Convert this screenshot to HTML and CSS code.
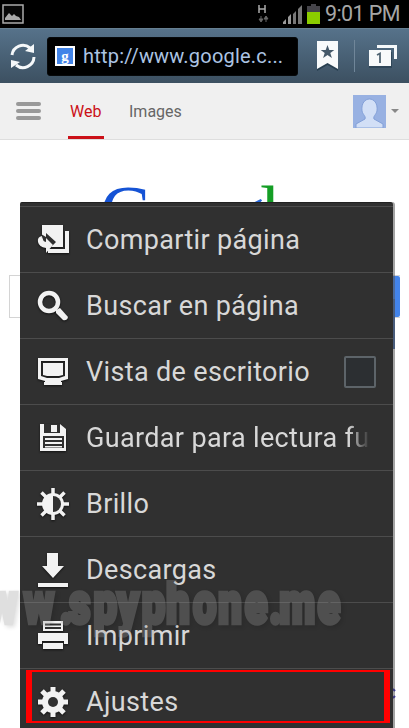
FILE: index.html
```html
<!DOCTYPE html>
<html lang="es">
<head>
<meta charset="utf-8">
<title>Google</title>
<link rel="stylesheet" href="styles.css">
</head>
<body>
<main class="phone">
  <header class="status">
    <svg class="picture" width="22" height="20" viewBox="0 0 22 20"><path d="M1 1h20v18H1z" fill="#080808" stroke="#aaa" stroke-width="1.5"/><path d="M3 16v-2l4-5 3 3 2-2 2 2 3 1 2 3z" fill="#aaa"/></svg>
    <svg class="network" width="12" height="20" viewBox="0 0 12 20"><path d="M1 1v8M7 1v8M1 5h6" stroke="#aaa" stroke-width="1.5"/><path d="M3 12v5M1 15l2 3 2-3zM8 18v-5M6 15l2-3 2 3z" fill="#666" stroke="#666"/></svg>
    <svg class="signal" width="19" height="19" viewBox="0 0 19 19"><path d="M0 19v-2l3-3v5zM5 19v-7l3-3v10z" fill="#999"/><path d="M10 19V9l3-3v13zM15 19V4l4-4v19z" fill="#777"/></svg>
    <svg class="battery" width="13" height="20" viewBox="0 0 13 20"><path d="M0 2h4V0h5v2h4v7H0z" fill="#45444a"/><path d="M0 8h13v12H0z" fill="#8bcc00"/></svg>
    <span class="clock">9:01 PM</span>
  </header>
  <nav class="toolbar">
    <svg class="reload" width="26" height="27" viewBox="0 0 26 27"><path d="M2 12A11 11 0 0 1 20 5M24 14A11 11 0 0 1 6 22" fill="none" stroke="#f5f8fa" stroke-width="3"/><path d="M24 1v9l-9-2zM1 25v-8l9 2z" fill="#f5f8fa"/></svg>
    <div class="address"><span class="favicon"><b>g</b></span><span class="url">http://www.google.c...</span></div>
    <svg class="bookmark" width="23" height="30" viewBox="0 0 23 30"><path d="M1 2h21v28l-10.500-6L1 30z" fill="#283f50"/><path d="M1 0h21v28l-10.500-6L1 28z" fill="#f8fafb"/><path d="M11.500 4l1.800 5h5l-4 3 1.600 5-4.400-3-4.400 3 1.600-5-4-3h5z" fill="#45596a"/></svg>
    <i class="divider"></i>
    <svg class="tabs" width="29" height="23" viewBox="0 0 29 23"><path d="M8 0h20v14h-3V3H8z" fill="#f5f8fa"/><path d="M0 7h23v16H0z" fill="#304759"/><path d="M0 5h22v16H0z" fill="#f8fafb"/><path d="M8 10l3-1.500V18" fill="none" stroke="#526675" stroke-width="1.800"/></svg>
  </nav>
  <nav class="google-bar">
    <span class="burger"><i></i><i></i><i></i></span>
    <span class="tab active">Web</span><span class="tab">Images</span>
    <svg class="avatar" width="33" height="33" viewBox="0 0 33 33"><path d="M0 0h33v33H0z" fill="#98b1e2"/><path d="M3 33v-4l9-5c1-3-2-4-3-8-2-16 17-16 15 0-1 4-4 5-3 8l9 5v4z" fill="#d2dff6" stroke="#83a0d8"/></svg>
    <i class="caret"></i>
  </nav>
  <section class="page">
    <svg class="logo" width="220" height="62" viewBox="0 0 220 62"><text y="96.5" x="-2 54 90 126 158 174"><tspan fill="#1553d5">G</tspan><tspan fill="#d83232">o</tspan><tspan fill="#edb51b">o</tspan><tspan fill="#2767db">g</tspan><tspan fill="#149e25">l</tspan><tspan fill="#d83232">e</tspan></text></svg>
    <div class="search"><i></i><b></b></div>
    <i class="edge-blue"></i>
    <svg class="edge-link" width="4" height="12" viewBox="0 0 4 12"><path d="M0 1l2 2M0 10l2-2" stroke="#2522b5" stroke-width="2"/></svg>
  </section>
  <ul class="menu">
    <li><svg viewBox="0 0 32 32"><path d="M28 7h4v22H11v-4h17z"/><path d="M5 1h21v22H5z"/><path class="cut" d="M4 10l5 3V9l10 9-6 6h-4z"/><path d="M5 12q-5 1-4 6 1 5 8 6v5l7-8-7-7v4q-5-1-4-6z"/></svg><span>Compartir página</span></li>
    <li><svg viewBox="0 0 32 32"><circle cx="12" cy="12" r="9" fill="none" stroke="#f2f2f2" stroke-width="4.5"/><path d="M19 20l4-2 8 9q-1 4-5 3l-7-7z"/></svg><span>Buscar en página</span></li>
    <li><svg viewBox="0 0 32 32"><path d="M1 2h30v21l-7 2v3H8v-3l-7-2zM4 5v15l6 2h12l6-2V5z" fill-rule="evenodd"/><path d="M6 7h20v12l-4 1H10l-4-1zM7 26h18v3H7z"/></svg><span>Vista de escritorio</span><i class="check"></i></li>
    <li><svg viewBox="0 0 32 32"><path d="M3 2h20l6 5v22H3z"/><path class="cut" d="M7 2h16v9H7zM6 14h21v12H6z"/><path d="M14 3h6v7h-6zM8 16h17v2H8zM8 20h17v2H8zM8 24h17v1.500H8z"/></svg><span class="fade">Guardar para lectura futura</span></li>
    <li><svg viewBox="0 0 32 32"><path d="M16 0v32M0 16h32M4.500 4.500l23 23M27.500 4.500l-23 23" stroke="#f2f2f2" stroke-width="3.500"/><circle cx="16" cy="16" r="11"/><path class="cut" d="M16 8a8 8 0 0 1 0 16z"/></svg><span>Brillo</span></li>
    <li><svg viewBox="0 0 32 32"><path d="M10 -1h11v13h6L16 24 5 12h5zM1 29h30v4H1z"/></svg><span>Descargas</span></li>
    <li><svg viewBox="0 0 32 32"><path d="M6 1h20v10H6zM1 13h30v11h-4v-3H5v3H1zM6 23h20v6H6z"/><path class="cut" d="M8 3.500h16v2H8zM8 7h16v2H8z"/></svg><span>Imprimir</span></li>
    <li><svg viewBox="0 0 32 32"><path d="M16 1v30M1 16h30M5 5l22 22M27 5L5 27" stroke="#f2f2f2" stroke-width="5"/><circle cx="16" cy="16" r="11"/><circle class="cut" cx="16" cy="16" r="5"/></svg><span>Ajustes</span></li>
  </ul>
  <div class="highlight"></div>
  <svg class="watermark" width="409" height="60" viewBox="0 0 409 60"><text transform="scale(.72 1)" y="42.500" x="-18 33 83 96 130 163 197 231 268 303 340 374 388 441">ww.spyphone.me</text></svg>
</main>
</body>
</html>
```
FILE: styles.css
```css
* { box-sizing: border-box; }
body { margin: 0; overflow: hidden; font-family: Roboto, "Liberation Sans", sans-serif; }
.phone { position: relative; width: 409px; height: 728px; overflow: hidden; background: #fff; }
.status { display: flex; align-items: center; height: 28px; background: #000; padding-left: 2px; }
.network { margin-left: 234px; }
.signal { margin-left: 13px; }
.battery { margin-left: 5px; }
.clock { margin-left: 5px; color: #a6a6a6; font-size: 21.5px; line-height: 28px; letter-spacing: -.6px; white-space: nowrap; }
.toolbar { display: flex; align-items: center; height: 55px; padding-left: 10px; border-top: 1px solid #667f91; background: linear-gradient(#56728a, #3c5061); }
.address { width: 251px; height: 39px; margin-left: 11px; border: 1px solid #07090b; border-radius: 3px; background: #000; display: flex; align-items: center; padding-left: 7px; }
.favicon { flex: none; width: 20px; height: 20px; border: 2px solid #fff; background: #4284e8; color: #fff; display: grid; place-items: center; font: 15px/13px "Liberation Serif", serif; overflow: hidden; }
.url { margin-left: 8px; color: #acc4e3; font-size: 20px; letter-spacing: .2px; white-space: nowrap; }
.bookmark { margin-left: 18px; }
.divider { width: 1px; height: 32px; margin-left: 15px; background: #708699; }
.tabs { margin-left: 14px; }
.google-bar { height: 57px; display: flex; align-items: center; background: #f0f0f0; border-bottom: 1px solid #dedede; }
.burger { display: grid; gap: 3px; margin-left: 16px; width: 25px; }
.burger i { height: 4px; border-radius: 2px; background: #999; }
.tab { align-self: stretch; margin-left: 25px; padding: 19px 0 0; font-size: 16px; line-height: 20px; color: #666; }
.tab.active { width: 36px; margin-left: 27px; padding-left: 2px; color: #cb1018; border-bottom: 3px solid #cb1018; white-space: nowrap; }
.avatar { margin-left: auto; }
.caret { margin: 0 10px 0 5px; border: 4px solid transparent; border-top: 4px solid #888; border-bottom: 0; }
.page { position: relative; height: 588px; }
.logo { display: block; margin-left: 102px; }
.logo text { font: 74px "Liberation Serif", serif; }
.search { display: flex; justify-content: space-between; margin: 73px 9px 0; height: 43px; border: 1px solid #d4d4d4; border-right: 0; }
.search b { width: 40px; background: #4384eb; border-radius: 2px; }
.edge-blue { position: absolute; left: 393px; top: 159px; width: 2px; height: 50px; background: #3c65a8; }
.edge-link { position: absolute; left: 393px; top: 548px; }
.menu { position: absolute; left: 20px; top: 202px; width: 373px; height: 532px; margin: 0; padding: 3px 0 0; list-style: none; background: #303030; box-shadow: 2px 0 0 #5558; border-top: 1px solid #222; border-radius: 2px 3px 0 0; }
.menu li { display: flex; align-items: center; height: 66px; border-top: 1px solid #4c4c4c; color: #d8d8d8; font-size: 27px; }
.menu svg { width: 32px; height: 32px; margin-left: 17px; flex: none; overflow: visible; fill: #f2f2f2; filter: drop-shadow(0 1px 1px #111); }
.menu .cut { fill: #303030; }
.menu span { margin-left: 17px; white-space: nowrap; letter-spacing: .35px; }
.menu .fade { width: 285px; overflow: hidden; mask-image: linear-gradient(to right, #000 262px, transparent 284px); }
.check { margin-left: auto; margin-right: 17px; width: 32px; height: 32px; border: 2px solid #5d6469; border-radius: 2px; background: #2c2f32; }
.highlight { position: absolute; left: 26px; top: 670px; width: 364px; height: 53px; border: 2px solid #f00; border-left-width: 6px; border-right-width: 6px; }
.watermark { position: absolute; left: 0; top: 580px; opacity: .3; filter: drop-shadow(2px 2px 2px #0006); }
.watermark text { font: 900 58px Roboto, sans-serif; fill: #999; stroke: #999; stroke-width: 4.500; }
```
